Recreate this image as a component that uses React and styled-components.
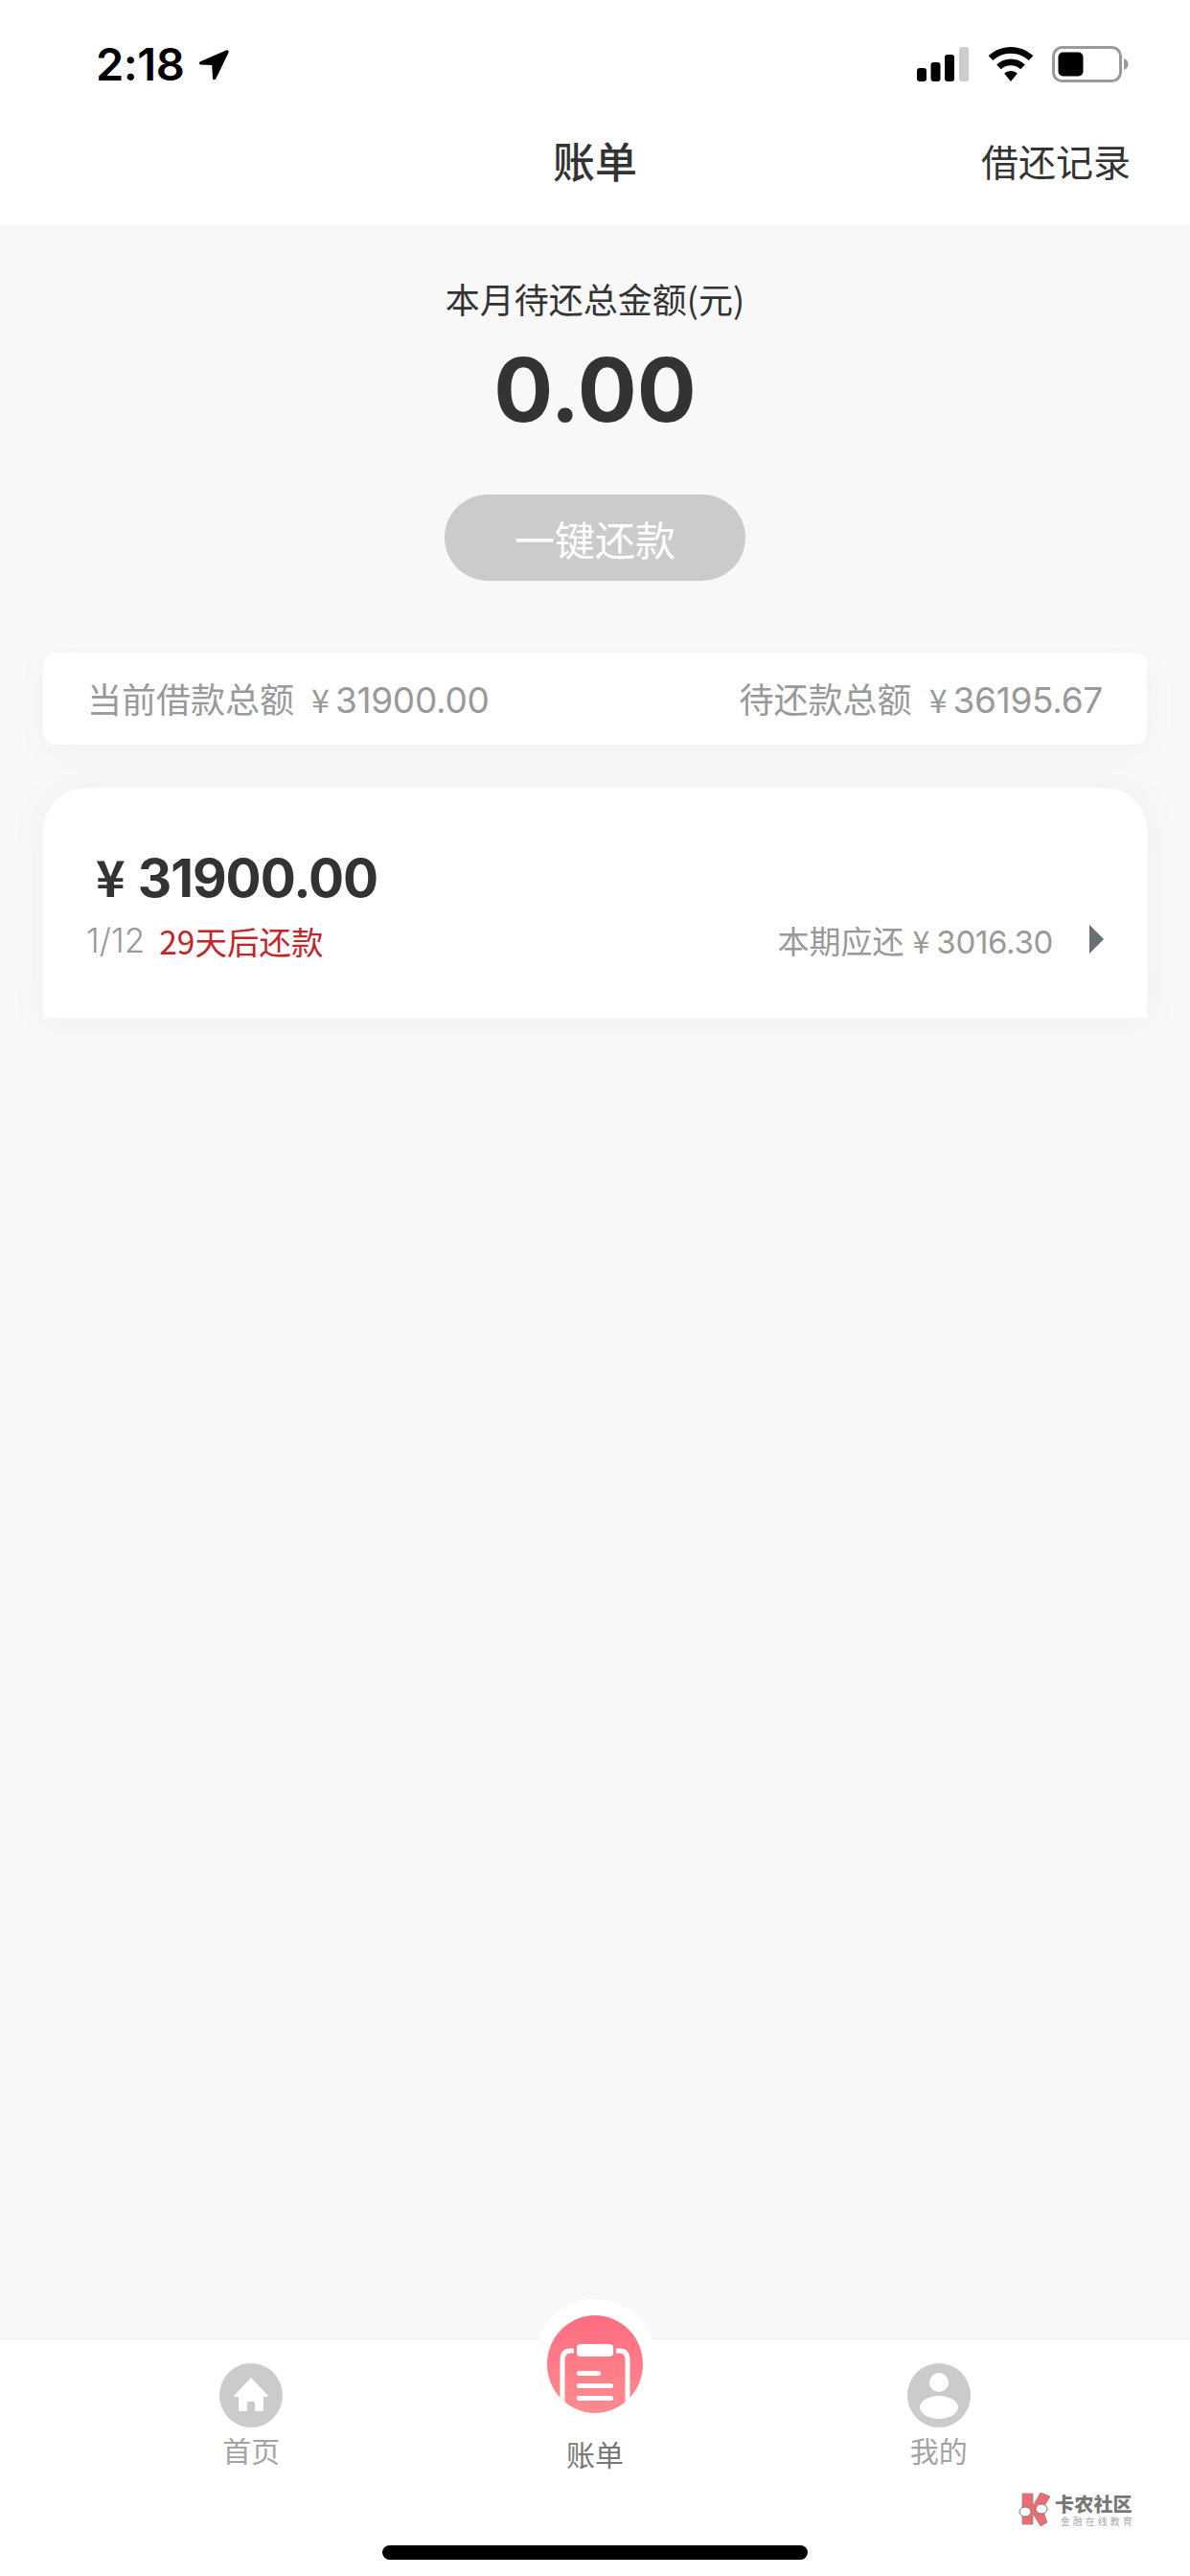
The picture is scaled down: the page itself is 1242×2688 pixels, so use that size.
import React from "react";
import styled, { createGlobalStyle } from "styled-components";

const cjk = `"Noto Sans CJK SC", "Noto Sans", sans-serif`;
const latin = `Inter, "Noto Sans CJK SC", sans-serif`;

const GlobalStyle = createGlobalStyle`
  html, body {
    margin: 0;
    padding: 0;
    background: #f8f8f9;
  }
  * {
    box-sizing: border-box;
  }
`;

const Page = styled.div`
  position: relative;
  width: 1242px;
  height: 2688px;
  display: flex;
  flex-direction: column;
  overflow: hidden;
  background: #f8f8f9;
  font-family: ${cjk};
`;

const Header = styled.header`
  background: #fff;
  height: 234px;
  display: flex;
  flex-direction: column;
`;

const StatusBar = styled.div`
  height: 100px;
  padding: 45px 64px 0 100px;
  display: flex;
  justify-content: space-between;
  align-items: flex-start;
`;

const TimeGroup = styled.div`
  display: flex;
  align-items: center;
  gap: 14px;
  height: 44px;
`;

const Time = styled.span`
  font-family: ${latin};
  font-size: 47px;
  font-weight: 600;
  letter-spacing: -0.5px;
  color: #000;
  line-height: 44px;
`;

const StatusIcons = styled.div`
  display: flex;
  align-items: center;
  gap: 19px;
  height: 44px;
`;

const NavBar = styled.div`
  height: 134px;
  padding: 0 62px;
  display: grid;
  grid-template-columns: 1fr auto 1fr;
  align-items: center;
`;

const Title = styled.h1`
  grid-column: 2;
  margin: 0;
  font-size: 44px;
  font-weight: 500;
  color: #333;
  line-height: 60px;
`;

const NavLink = styled.a`
  justify-self: end;
  font-size: 39px;
  color: #333;
  line-height: 60px;
`;

const Main = styled.main`
  flex: 1;
  display: flex;
  flex-direction: column;
  align-items: center;
  padding: 52px 45px 0;
`;

const DueLabel = styled.div`
  font-size: 36px;
  line-height: 50px;
  color: #333;
  font-weight: 400;
`;

const DueAmount = styled.div`
  margin-top: 21px;
  font-family: ${latin};
  font-size: 92px;
  font-weight: 700;
  line-height: 100px;
  color: #333;
`;

const PayButton = styled.button`
  margin-top: 59px;
  width: 314px;
  height: 90px;
  border: none;
  border-radius: 45px;
  background: #cbcbcb;
  color: #fff;
  font-family: ${cjk};
  font-size: 42px;
  padding: 0;
`;

const Summary = styled.div`
  margin-top: 75px;
  align-self: stretch;
  height: 96px;
  padding: 0 46px;
  display: flex;
  justify-content: space-between;
  align-items: center;
  background: #fff;
  border-radius: 12px;
  box-shadow: 0 6px 30px rgba(120, 130, 150, 0.05);
`;

const SummaryItem = styled.span`
  font-size: 36px;
  line-height: 50px;
  color: #999;
  white-space: pre;
`;

const Amount = styled.span`
  font-family: ${latin};
  font-size: ${(p) => p.$size || "37px"};
  letter-spacing: -0.3px;
`;

const Yen = styled.span`
  display: inline-block;
  font-family: ${cjk};
  font-size: ${(p) => p.$size || "34px"};
  font-weight: ${(p) => p.$weight || 400};
  margin: 0 ${(p) => p.$after || "6px"} 0 ${(p) => p.$before || "18px"};
`;

const LoanCard = styled.section`
  margin-top: 45px;
  align-self: stretch;
  height: 240px;
  padding: 59px 45px 0;
  background: #fff;
  border-radius: 44px 44px 0 0;
  box-shadow: 0 0 36px rgba(120, 130, 150, 0.07);
`;

const LoanAmount = styled.div`
  font-family: ${latin};
  font-size: 55px;
  font-weight: 700;
  line-height: 66px;
  color: #333;
  padding-left: 10px;
  letter-spacing: -1px;
`;

const LoanRow = styled.div`
  margin-top: 9px;
  display: flex;
  align-items: center;
  height: 46px;
`;

const Term = styled.span`
  font-family: ${latin};
  font-size: 35px;
  font-weight: 300;
  color: #999;
  margin-right: 15px;
`;

const DueDays = styled.span`
  font-size: 33.500px;
  color: #c4242b;
`;

const Installment = styled.span`
  margin-left: auto;
  font-size: 33px;
  color: #999;
`;

const Arrow = styled.svg`
  margin: 0 0 2px 38px;
  display: block;
`;

const TabBar = styled.nav`
  position: relative;
  height: 248px;
  padding: 25px 83px 0;
  background: #fff;
  border-top: 1px solid #efefef;
  display: grid;
  grid-template-columns: repeat(3, 1fr);
  align-items: start;
`;

const Tab = styled.div`
  display: flex;
  flex-direction: column;
  align-items: center;
`;

const TabHalo = styled.div`
  width: 126px;
  height: 126px;
  margin-top: -67px;
  padding-top: 17px;
  border-radius: 50%;
  background: #fff;
  display: flex;
  justify-content: center;
  align-items: flex-start;
`;

const TabLabel = styled.span`
  font-size: 30px;
  line-height: 42px;
  margin-top: ${(p) => (p.$active ? "14px" : "2px")};
  color: ${(p) => (p.$active ? "#777" : "#a3a3a3")};
`;

const Watermark = styled.div`
  position: absolute;
  left: 1062px;
  top: 160px;
  display: flex;
  align-items: center;
  gap: 3px;
`;

const WatermarkText = styled.div`
  display: flex;
  flex-direction: column;
  align-items: flex-end;
`;

const WatermarkName = styled.span`
  font-size: 20px;
  font-weight: 900;
  line-height: 21px;
  letter-spacing: 0.2px;
  color: #777;
`;

const WatermarkSlogan = styled.span`
  margin-top: 1px;
  font-size: 10px;
  line-height: 13px;
  letter-spacing: 3px;
  margin-right: -3px;
  color: #aaa;
`;

const HomeIndicator = styled.div`
  position: absolute;
  left: 399px;
  bottom: 17px;
  width: 444px;
  height: 15px;
  border-radius: 8px;
  background: #000;
`;

const LocationIcon = () => (
  <svg width="33" height="33" viewBox="0 0 33 33">
    <path
      d="M30 1.500 3 13.200c-1.800.8-1.300 3.200.6 3.300l11.600.5.8 13.400c.1 2 2.700 2.400 3.400.6L32.500 4c.6-1.600-.9-3.200-2.500-2.500Z"
      fill="#000"
    />
  </svg>
);

const SignalIcon = () => (
  <svg width="56" height="36" viewBox="0 0 56 36">
    <rect x="1" y="22" width="10" height="14" rx="3" fill="#000" />
    <rect x="15.500" y="16" width="10" height="20" rx="3" fill="#000" />
    <rect x="30" y="8" width="10" height="28" rx="3" fill="#000" />
    <rect x="45" y="0" width="10" height="36" rx="3" fill="#ccc" />
  </svg>
);

const WifiIcon = () => (
  <svg width="48" height="36" viewBox="0 0 48 36">
    <path d="M24 0C15 0 6.800 3.500.7 9.300l4.600 4.800C10.200 9.400 16.800 6.700 24 6.700s13.800 2.700 18.700 7.400l4.600-4.800C41.200 3.500 33 0 24 0Z" fill="#000" />
    <path d="M24 12.500c-5.700 0-10.900 2.200-14.800 5.900l4.600 4.800c2.700-2.500 6.300-4 10.200-4s7.500 1.500 10.200 4l4.600-4.800c-3.900-3.700-9.100-5.900-14.800-5.900Z" fill="#000" />
    <path d="M24 25c-2.600 0-5 1-6.800 2.700L24 36l6.800-8.300C29 26 26.600 25 24 25Z" fill="#000" />
  </svg>
);

const BatteryIcon = () => (
  <svg width="80" height="38" viewBox="0 0 80 38">
    <rect x="1.500" y="1.500" width="70" height="35" rx="9" fill="#fff" stroke="#9a9a9a" strokeWidth="3" />
    <rect x="6.500" y="6.500" width="26" height="25" rx="5" fill="#000" />
    <path d="M75 13c2.800 1 4.500 3.300 4.500 6s-1.700 5-4.500 6Z" fill="#9a9a9a" />
  </svg>
);

const HomeTabIcon = () => (
  <svg width="66" height="67" viewBox="0 0 66 67">
    <ellipse cx="33" cy="33.500" rx="33" ry="33.500" fill="#cbcbcb" />
    <path d="M33 15 15.500 33.500c-.7.8-.2 1.500.7 1.500H20v13.500c0 .8.7 1.500 1.500 1.500H29V40.500h8V50h7.500c.8 0 1.500-.7 1.500-1.500V35h3.800c.9 0 1.400-.7.7-1.500Z" fill="#fff" />
    <rect x="30" y="40" width="6" height="10" fill="#cbcbcb" />
  </svg>
);

const BillTabIcon = () => (
  <svg width="100" height="102" viewBox="0 0 100 102">
    <defs>
      <linearGradient id="billGradient" x1="0.6" y1="0" x2="0.5" y2="1">
        <stop offset="0" stopColor="#ff6c80" />
        <stop offset="1" stopColor="#ff8b8f" />
      </linearGradient>
      <clipPath id="billCircle">
        <ellipse cx="50" cy="51" rx="50" ry="51" />
      </clipPath>
    </defs>
    <ellipse cx="50" cy="51" rx="50" ry="51" fill="url(#billGradient)" />
    <g clipPath="url(#billCircle)">
      <path d="M28 37h-4c-6 0-8 4-8 10v46" fill="none" stroke="#fff" strokeWidth="5" />
      <path d="M72 37h4c6 0 8 4 8 10v46" fill="none" stroke="#fff" strokeWidth="5" />
    </g>
    <rect x="31" y="30" width="38" height="13" rx="4" fill="#fff" />
    <rect x="31" y="58" width="25" height="5" rx="2.500" fill="#fff" />
    <rect x="31" y="71" width="38" height="5" rx="2.500" fill="#fff" />
    <rect x="31" y="84" width="38" height="5" rx="2.500" fill="#fff" />
  </svg>
);

const MineTabIcon = () => (
  <svg width="66" height="67" viewBox="0 0 66 67">
    <ellipse cx="33" cy="33.500" rx="33" ry="33.500" fill="#cbcbcb" />
    <circle cx="33" cy="20" r="10" fill="#fff" />
    <ellipse cx="33" cy="46" rx="20" ry="12" fill="#fff" />
  </svg>
);

const WatermarkLogo = () => (
  <svg width="36" height="36" viewBox="0 0 36 36">
    <path d="M5 1h11v13l8-14 10 4-8 13 5 14-7 4-8-13v11H5Z" fill="#ee6b74" stroke="#888" strokeWidth="0.8" />
    <ellipse cx="8" cy="20" rx="6" ry="5" fill="#fff" stroke="#777" strokeWidth="1" />
    <ellipse cx="25" cy="17" rx="6" ry="5" fill="#fff" stroke="#777" strokeWidth="1" />
  </svg>
);

export default function App() {
  return (
    <Page>
      <GlobalStyle />
      <Header>
        <StatusBar>
          <TimeGroup>
            <Time>2:18</Time>
            <LocationIcon />
          </TimeGroup>
          <StatusIcons>
            <SignalIcon />
            <WifiIcon />
            <BatteryIcon />
          </StatusIcons>
        </StatusBar>
        <NavBar>
          <Title>账单</Title>
          <NavLink>借还记录</NavLink>
        </NavBar>
      </Header>

      <Main>
        <DueLabel>本月待还总金额(元)</DueLabel>
        <DueAmount>0.00</DueAmount>
        <PayButton>一键还款</PayButton>

        <Summary>
          <SummaryItem>
            当前借款总额
            <Yen>¥</Yen>
            <Amount>31900.00</Amount>
          </SummaryItem>
          <SummaryItem>
            待还款总额
            <Yen>¥</Yen>
            <Amount>36195.67</Amount>
          </SummaryItem>
        </Summary>

        <LoanCard>
          <LoanAmount>
            <Yen $size="52px" $weight={700} $before="0" $after="14px">¥</Yen>
            31900.00
          </LoanAmount>
          <LoanRow>
            <Term>1/12</Term>
            <DueDays>29天后还款</DueDays>
            <Installment>
              本期应还
              <Yen $size="32px" $before="9px" $after="7px">¥</Yen>
              <Amount $size="33px">3016.30</Amount>
            </Installment>
            <Arrow width="15" height="30" viewBox="0 0 15 30">
              <path d="M0 0 15 15 0 30Z" fill="#666e76" />
            </Arrow>
          </LoanRow>
        </LoanCard>
      </Main>

      <TabBar>
        <Tab>
          <HomeTabIcon />
          <TabLabel>首页</TabLabel>
        </Tab>
        <Tab>
          <TabHalo>
            <BillTabIcon />
          </TabHalo>
          <TabLabel $active>账单</TabLabel>
        </Tab>
        <Tab>
          <MineTabIcon />
          <TabLabel>我的</TabLabel>
        </Tab>
        <Watermark>
          <WatermarkLogo />
          <WatermarkText>
            <WatermarkName>卡农社区</WatermarkName>
            <WatermarkSlogan>金融在线教育</WatermarkSlogan>
          </WatermarkText>
        </Watermark>
        <HomeIndicator />
      </TabBar>
    </Page>
  );
}
